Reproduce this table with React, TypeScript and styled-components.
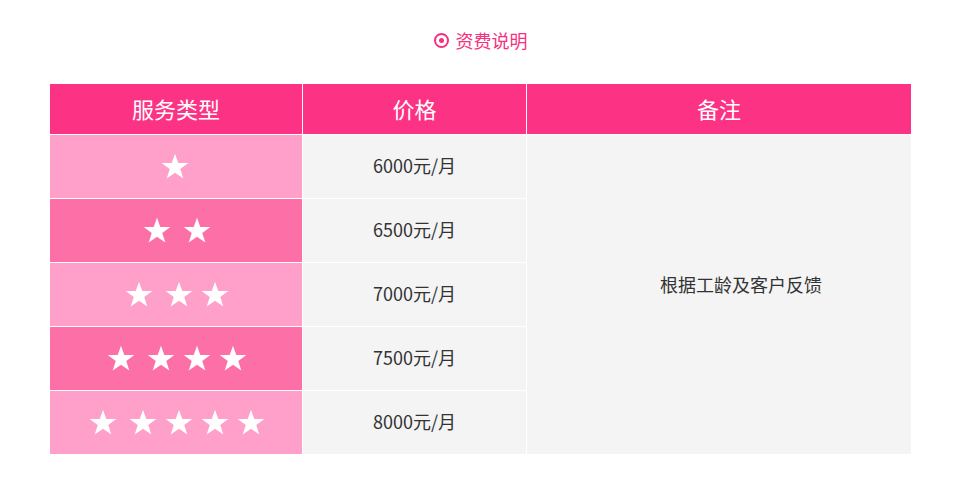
import { type FC } from "react";
import styled, { createGlobalStyle } from "styled-components";

const GlobalStyle = createGlobalStyle`
  body {
    margin: 0;
    background: #fff;
    font-family: "Noto Sans CJK SC", "Noto Sans", sans-serif;
  }
`;

const Page = styled.div`
  width: 960px;
  height: 494px;
  padding-top: 28px;
  box-sizing: border-box;
`;

const Title = styled.h2`
  display: flex;
  align-items: center;
  justify-content: center;
  gap: 7px;
  margin: 0 0 32px;
  height: 24px;
  font-size: 18px;
  font-weight: 400;
  color: #f5317f;
  padding-left: 1px;
`;

const Ring = styled.span`
  width: 15px;
  height: 15px;
  box-sizing: border-box;
  border: 2px solid #f5317f;
  border-radius: 50%;
  display: flex;
  align-items: center;
  justify-content: center;

  &::after {
    content: "";
    width: 5px;
    height: 5px;
    border-radius: 50%;
    background: #f5317f;
  }
`;

const Table = styled.table`
  margin-left: 50px;
  width: 861px;
  border-collapse: collapse;
  table-layout: fixed;
`;

const HeadCell = styled.th<{ $w: number }>`
  width: ${(p) => p.$w}px;
  height: 47px;
  padding: 0 0 3px;
  background: #fc3285;
  color: #fff;
  font-size: 22px;
  font-weight: 400;
  border-left: 1px solid #fff;
  border-bottom: 1px solid #fff;

  &:first-child {
    border-left: none;
  }
`;

const StarCell = styled.td<{ $dark: boolean }>`
  height: 62px;
  padding: 0 0 1px 1px;
  background: ${(p) => (p.$dark ? "#fd70a7" : "#fea0c9")};
  border-bottom: 1px solid #fff;
`;

const Stars = styled.div`
  display: flex;
  justify-content: center;
  align-items: center;
  gap: 8px;

  & > svg:first-child {
    margin-right: 4px;
  }
`;

const PriceCell = styled.td`
  padding: 0 0 4px;
  background: #f4f4f4;
  text-align: center;
  font-size: 18px;
  color: #333;
  border-left: 1px solid #fff;
  border-bottom: 1px solid #fff;
`;

const NoteCell = styled.td`
  padding: 0 0 22px 44px;
  background: #f4f4f4;
  text-align: center;
  font-size: 18px;
  color: #333;
  border-left: 1px solid #fff;
  border-bottom: 1px solid #fff;
`;

const Star: FC = () => (
  <svg width="28" height="27" viewBox="0 0 24 23">
    <path
      d="M12 0.5l2.8 8.1h8.6l-6.9 5 2.6 8.2L12 16.8l-7.1 5 2.6-8.2-6.9-5h8.6z"
      fill="#fff"
    />
  </svg>
);

const rows = [
  { stars: 1, price: "6000元/月" },
  { stars: 2, price: "6500元/月" },
  { stars: 3, price: "7000元/月" },
  { stars: 4, price: "7500元/月" },
  { stars: 5, price: "8000元/月" },
];

const App: FC = function () {
  return (
    <Page>
      <GlobalStyle />
      <Title>
        <Ring />
        资费说明
      </Title>
      <Table>
        <thead>
          <tr>
            <HeadCell $w={252}>服务类型</HeadCell>
            <HeadCell $w={223}>价格</HeadCell>
            <HeadCell $w={384}>备注</HeadCell>
          </tr>
        </thead>
        <tbody>
          {rows.map((r, i) => (
            <tr key={r.price}>
              <StarCell $dark={i % 2 === 1}>
                <Stars>
                  {Array.from({ length: r.stars }, (_, k) => (
                    <Star key={k} />
                  ))}
                </Stars>
              </StarCell>
              <PriceCell>{r.price}</PriceCell>
              {i === 0 && <NoteCell rowSpan={5}>根据工龄及客户反馈</NoteCell>}
            </tr>
          ))}
        </tbody>
      </Table>
    </Page>
  );
};

export default App;
